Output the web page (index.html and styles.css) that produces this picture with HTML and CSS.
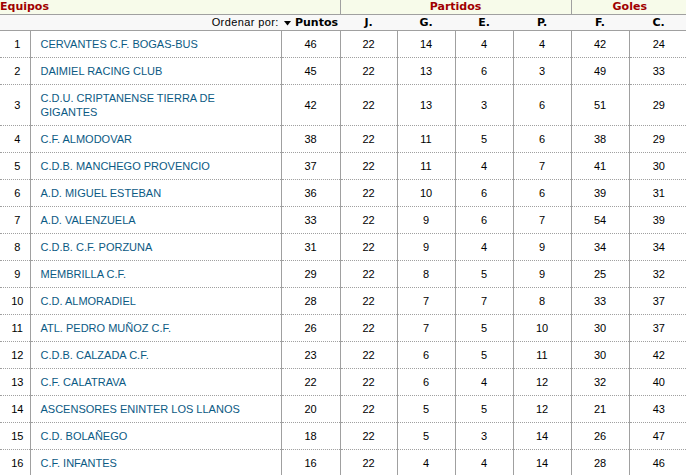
FILE: index.html
```html
<!DOCTYPE html>
<html lang="es">
<head>
<meta charset="utf-8">
<title>Clasificación</title>
<link rel="stylesheet" href="styles.css">
</head>
<body>
<table class="standings">
  <colgroup>
    <col class="c-pos"><col class="c-team"><col class="c-pts">
    <col class="c-j"><col class="c-n"><col class="c-n"><col class="c-n">
    <col class="c-n"><col class="c-last">
  </colgroup>
  <thead>
    <tr class="group-row">
      <th colspan="3" class="g-equipos sep">Equipos</th>
      <th colspan="4" class="g-center sep">Partidos</th>
      <th colspan="2" class="g-center">Goles</th>
    </tr>
    <tr class="sub-row">
      <th colspan="3" class="order"><span class="order-label">Ordenar por:</span> <svg class="tri" width="7" height="5" viewBox="0 0 7 5"><polygon points="0,0 7,0 3.5,4.5" fill="#000"/></svg> <b>Puntos</b></th>
      <th>J.</th><th>G.</th><th>E.</th><th>P.</th><th>F.</th><th>C.</th>
    </tr>
  </thead>
  <tbody>
    <tr><td class="pos">1</td><td class="team"><a>CERVANTES C.F. BOGAS-BUS</a></td><td>46</td><td>22</td><td>14</td><td>4</td><td>4</td><td>42</td><td>24</td></tr>
    <tr><td class="pos">2</td><td class="team"><a>DAIMIEL RACING CLUB</a></td><td>45</td><td>22</td><td>13</td><td>6</td><td>3</td><td>49</td><td>33</td></tr>
    <tr><td class="pos">3</td><td class="team"><a>C.D.U. CRIPTANENSE TIERRA DE GIGANTES</a></td><td>42</td><td>22</td><td>13</td><td>3</td><td>6</td><td>51</td><td>29</td></tr>
    <tr><td class="pos">4</td><td class="team"><a>C.F. ALMODOVAR</a></td><td>38</td><td>22</td><td>11</td><td>5</td><td>6</td><td>38</td><td>29</td></tr>
    <tr><td class="pos">5</td><td class="team"><a>C.D.B. MANCHEGO PROVENCIO</a></td><td>37</td><td>22</td><td>11</td><td>4</td><td>7</td><td>41</td><td>30</td></tr>
    <tr><td class="pos">6</td><td class="team"><a>A.D. MIGUEL ESTEBAN</a></td><td>36</td><td>22</td><td>10</td><td>6</td><td>6</td><td>39</td><td>31</td></tr>
    <tr><td class="pos">7</td><td class="team"><a>A.D. VALENZUELA</a></td><td>33</td><td>22</td><td>9</td><td>6</td><td>7</td><td>54</td><td>39</td></tr>
    <tr><td class="pos">8</td><td class="team"><a>C.D.B. C.F. PORZUNA</a></td><td>31</td><td>22</td><td>9</td><td>4</td><td>9</td><td>34</td><td>34</td></tr>
    <tr><td class="pos">9</td><td class="team"><a>MEMBRILLA C.F.</a></td><td>29</td><td>22</td><td>8</td><td>5</td><td>9</td><td>25</td><td>32</td></tr>
    <tr><td class="pos">10</td><td class="team"><a>C.D. ALMORADIEL</a></td><td>28</td><td>22</td><td>7</td><td>7</td><td>8</td><td>33</td><td>37</td></tr>
    <tr><td class="pos">11</td><td class="team"><a>ATL. PEDRO MUÑOZ C.F.</a></td><td>26</td><td>22</td><td>7</td><td>5</td><td>10</td><td>30</td><td>37</td></tr>
    <tr><td class="pos">12</td><td class="team"><a>C.D.B. CALZADA C.F.</a></td><td>23</td><td>22</td><td>6</td><td>5</td><td>11</td><td>30</td><td>42</td></tr>
    <tr><td class="pos">13</td><td class="team"><a>C.F. CALATRAVA</a></td><td>22</td><td>22</td><td>6</td><td>4</td><td>12</td><td>32</td><td>40</td></tr>
    <tr><td class="pos">14</td><td class="team"><a>ASCENSORES ENINTER LOS LLANOS</a></td><td>20</td><td>22</td><td>5</td><td>5</td><td>12</td><td>21</td><td>43</td></tr>
    <tr><td class="pos">15</td><td class="team"><a>C.D. BOLAÑEGO</a></td><td>18</td><td>22</td><td>5</td><td>3</td><td>14</td><td>26</td><td>47</td></tr>
    <tr><td class="pos">16</td><td class="team"><a>C.F. INFANTES</a></td><td>16</td><td>22</td><td>4</td><td>4</td><td>14</td><td>28</td><td>46</td></tr>
  </tbody>
</table>
</body>
</html>
```

FILE: styles.css
```css
html, body {
  margin: 0;
  padding: 0;
  background: #ffffff;
  overflow: hidden;
}

.standings {
  border-collapse: collapse;
  table-layout: fixed;
  width: 688px;
  font-family: "Liberation Sans", Arial, sans-serif;
  font-size: 11px;
  color: #000;
}

.c-pos { width: 30px; }
.c-team { width: 251px; }
.c-pts { width: 59px; }
.c-j { width: 57px; }
.c-n { width: 58px; }
.c-last { width: 59px; }

.group-row th {
  height: 14px;
  padding: 0;
  background: #f7fbea;
  color: #a00000;
  font-family: "DejaVu Sans", sans-serif;
  font-weight: bold;
  font-size: 11px;
  line-height: 14px;
  border-bottom: 1px solid #a0a0a0;
}

.group-row .g-equipos { text-align: left; }
.group-row .g-center { text-align: center; }
.group-row .sep { border-right: 1px solid #a0a0a0; }

.sub-row th {
  height: 14px;
  padding: 0;
  background: #f8f8f8;
  font-family: "DejaVu Sans", sans-serif;
  font-weight: bold;
  font-size: 11px;
  line-height: 14px;
  text-align: center;
  border-bottom: 1px solid #a0a0a0;
}

.sub-row .order {
  text-align: right;
  padding-right: 2px;
  font-family: "Liberation Sans", Arial, sans-serif;
  font-weight: normal;
}

.order-label {
  letter-spacing: 0.4px;
}

.sub-row .order b {
  font-family: "DejaVu Sans", sans-serif;
  font-weight: bold;
}

.tri {
  vertical-align: 0px;
  margin: 0 1px 0 2px;
}

tbody td {
  padding: 6px 0;
  line-height: 14px;
  text-align: center;
  vertical-align: middle;
  border-bottom: 1px dotted #a0a0a0;
  border-left: 1px solid #a0a0a0;
}

tbody td.pos {
  border-left: none;
  padding-left: 5px;
}

tbody td.team {
  text-align: left;
  padding-left: 10px;
  padding-right: 40px;
}

.team a {
  color: #0b5a84;
  text-decoration: none;
}
```
